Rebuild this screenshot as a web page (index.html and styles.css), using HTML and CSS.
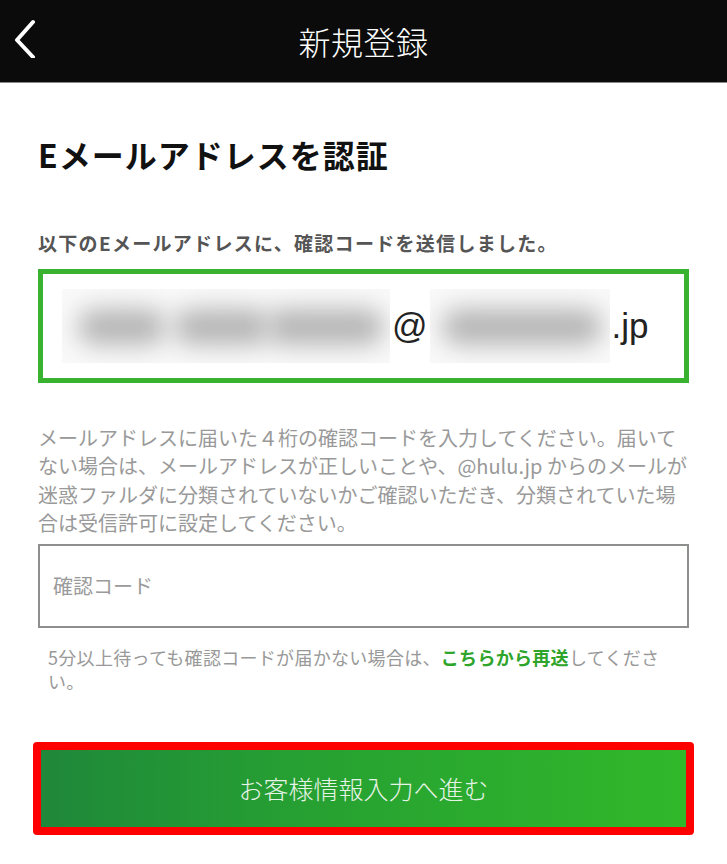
FILE: index.html
```html
<!DOCTYPE html>
<html lang="ja">
<head>
<meta charset="utf-8">
<title>新規登録</title>
<link rel="stylesheet" href="styles.css">
</head>
<body>
<header class="topbar">
  <span class="back">
    <svg width="40" height="48" viewBox="0 0 40 48"><path d="M26 12 L10 30 L26 47" fill="none" stroke="#fff" stroke-width="4" stroke-linecap="round" stroke-linejoin="round"/></svg>
  </span>
  <h1 class="title">新規登録</h1>
</header>
<main class="content">
  <h2 class="heading">Eメールアドレスを認証</h2>
  <p class="lead">以下のEメールアドレスに、確認コードを送信しました。</p>
  <div class="emailbox">
    <span class="blur blur-a"><i class="blob b1"></i><i class="blob b2"></i><i class="blob b3"></i></span>
    <span class="at">@</span>
    <span class="blur blur-b"><i class="blob b4"></i></span>
    <span class="tld">.jp</span>
  </div>
  <p class="desc">メールアドレスに届いた４桁の確認コードを入力してください。届いて<br>ない場合は、メールアドレスが正しいことや、@hulu.jp からのメールが<br>迷惑ファルダに分類されていないかご確認いただき、分類されていた場<br>合は受信許可に設定してください。</p>
  <div class="codebox"><span class="placeholder">確認コード</span></div>
  <p class="note">5分以上待っても確認コードが届かない場合は、<a class="resend">こちらから再送</a>してくださ<br>い。</p>
  <div class="btnwrap"><div class="btn">お客様情報入力へ進む</div></div>
</main>
</body>
</html>
```
FILE: styles.css
```css
html, body {
  margin: 0;
  padding: 0;
  background: #fff;
  font-family: "Noto Sans CJK JP", "Noto Sans", sans-serif;
}
.topbar {
  height: 82px;
  background: #0a0b0a;
  border-bottom: 1px solid #8a8a8a;
  display: flex;
  align-items: center;
  justify-content: center;
  position: relative;
}
.back {
  position: absolute;
  left: 7px;
  top: 10px;
  width: 40px;
  height: 58px;
}
.title {
  margin: 0;
  color: #fff;
  font-size: 32px;
  font-weight: 300;
  line-height: 40px;
  letter-spacing: 0.5px;
}
.content {
  padding: 0 38px;
}
.heading {
  margin: 51px 0 0;
  font-size: 32px;
  line-height: 40px;
  font-weight: 700;
  color: #111;
  letter-spacing: 1px;
}
.lead {
  margin: 56px 0 0;
  font-size: 19px;
  line-height: 26px;
  font-weight: 700;
  color: #555;
  letter-spacing: 1.3px;
}
.emailbox {
  margin-top: 13px;
  height: 104px;
  border: 5px solid #38b22f;
  display: flex;
  align-items: center;
  padding-left: 19px;
  font-family: "Liberation Sans", Arial, sans-serif;
  font-size: 35px;
  color: #222;
}
.blur {
  height: 74px;
  background: #f9f9f9;
  position: relative;
  overflow: hidden;
  display: flex;
  align-items: center;
}
.blur-a { width: 328px; }
.blur-b { width: 180px; margin-left: 2px; }
.at { padding: 0 0 0 2px; line-height: 40px; }
.tld { padding-left: 2px; line-height: 40px; }
.blob {
  display: block;
  height: 36px;
  background: #b5b5b5;
  border-radius: 18px;
  filter: blur(12px);
  position: absolute;
  top: 20px;
}
.b1 { left: 16px; width: 88px; }
.b2 { left: 112px; width: 96px; }
.b3 { left: 204px; width: 118px; }
.b4 { left: 12px; width: 160px; }
.desc {
  margin: 41px 0 0;
  font-size: 20px;
  line-height: 28.4px;
  color: #999;
  white-space: nowrap;
}
.codebox {
  margin-top: 6px;
  height: 80px;
  border: 2px solid #8c8f8c;
  display: flex;
  align-items: center;
  padding-left: 13px;
}
.placeholder {
  font-size: 20px;
  color: #9a9a9a;
}
.note {
  margin: 17px 0 0;
  padding-left: 10px;
  font-size: 18px;
  line-height: 24px;
  color: #999;
  letter-spacing: 0.3px;
  white-space: nowrap;
}
.resend {
  color: #2ea52a;
  font-weight: 700;
}
.btnwrap {
  margin: 49px -5px 0;
  border: 8px solid #ff0000;
  border-radius: 4px;
}
.btn {
  height: 77px;
  background: linear-gradient(90deg, #1f883a 0%, #26a032 40%, #31b82a 100%);
  color: #e6f3e6;
  font-size: 25px;
  font-weight: 300;
  display: flex;
  align-items: center;
  justify-content: center;
}
```
